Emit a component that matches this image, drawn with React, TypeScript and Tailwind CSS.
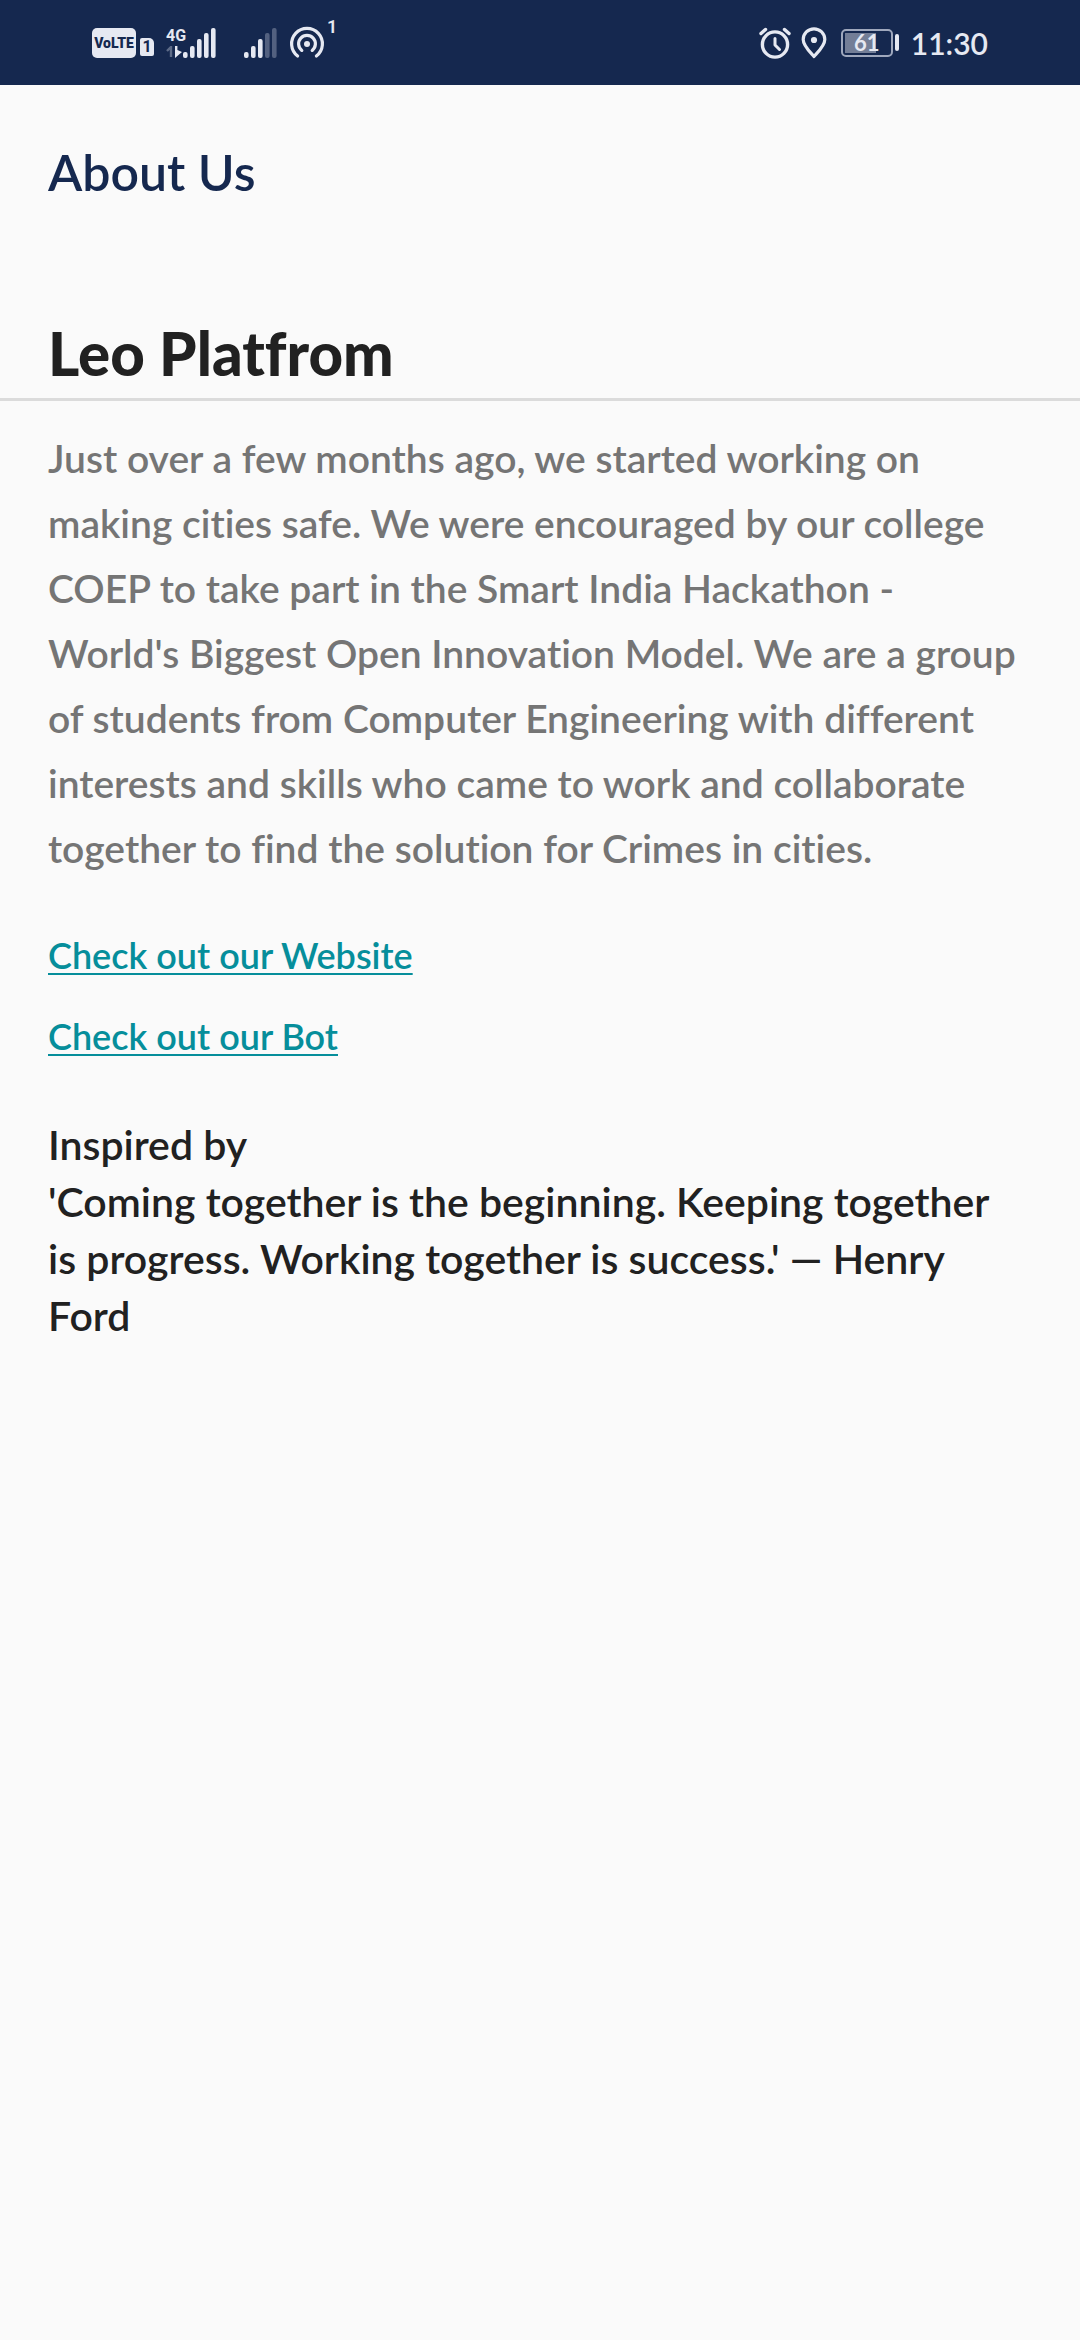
import React from "react";

const INK = "#e6e9f2";

function VolteBadge() {
  return (
    <span className="flex h-[30px] w-11 items-center justify-center rounded-[5px] bg-[#e6e9f2] font-['Roboto',sans-serif] text-sm font-black leading-none text-[#15284f]">
      VoLTE
    </span>
  );
}

function SimBadge() {
  return (
    <span className="mt-2 ml-1 flex h-[18px] w-3.5 items-center justify-center rounded-[2px] rounded-tr-[5px] bg-[#e6e9f2] font-['Roboto',sans-serif] text-base font-bold leading-none text-[#15284f]">
      1
    </span>
  );
}

const BARS = [
  { x: 0, h: 6 },
  { x: 7, h: 12 },
  { x: 14, h: 19 },
  { x: 21, h: 25 },
  { x: 28, h: 30 },
];

function SignalBars({ lit }: { lit: number }) {
  return (
    <svg width="33" height="30" viewBox="0 0 33 30" aria-hidden="true">
      {BARS.map((b, i) => (
        <rect key={b.x} x={b.x} y={30 - b.h} width="4.6" height={b.h} rx="2" fill={INK} opacity={i < lit ? 1 : 0.3} />
      ))}
    </svg>
  );
}

function Network() {
  return (
    <span className="ml-3 flex h-[30px] w-[17px] flex-col justify-between">
      <span className="font-['Roboto',sans-serif] text-base font-bold leading-4 text-[#e6e9f2]">4G</span>
      <svg width="17" height="12" viewBox="0 0 17 12" aria-hidden="true">
        <path d="M1 5 5 1V11" fill="none" stroke={INK} strokeWidth="2.4" opacity="0.35" />
        <path d="M9 0h2.4v4L16 6 9 12z" fill={INK} />
      </svg>
    </span>
  );
}

function Hotspot() {
  return (
    <svg width="36" height="34" viewBox="0 0 36 34" className="ml-3" fill="none" stroke={INK} strokeWidth="3.2" strokeLinecap="round" aria-label="Hotspot">
      <path d="M8.6 30A15.4 15.4 0 1 1 27.4 30" />
      <path d="M12.8 24.4A8.4 8.4 0 1 1 23.2 24.4" />
      <circle cx="18" cy="18" r="3" fill={INK} stroke="none" />
    </svg>
  );
}

function Alarm() {
  return (
    <svg width="32" height="32" viewBox="0 0 32 32" fill="none" stroke={INK} strokeWidth="3.4" strokeLinecap="round" strokeLinejoin="round" aria-label="Alarm">
      <circle cx="16" cy="17.5" r="12.6" />
      <path d="M16 11.5V18L20.5 22.5" strokeWidth="3" />
      <path d="M2 6.5 6.5 2.5M30 6.5 25.5 2.5" />
    </svg>
  );
}

function Pin() {
  return (
    <svg width="26" height="32" viewBox="0 0 26 32" className="ml-2.5" fill="none" stroke={INK} strokeWidth="3.2" strokeLinejoin="round" aria-label="Location">
      <path d="M13 29.5C9 25 2.2 19 2.2 12.6A10.8 10.8 0 0 1 23.8 12.6C23.8 19 17 25 13 29.5Z" />
      <circle cx="13" cy="13" r="3.1" fill={INK} stroke="none" />
    </svg>
  );
}

function Battery() {
  return (
    <span className="ml-3.5 flex items-center gap-0.5">
      <span className="relative flex h-7 w-[52px] items-center justify-center rounded-[5px] border-2 border-[#9fa8bd]">
        <span className="absolute inset-y-0.5 left-0.5 w-[31px] bg-[#737e97]" />
        <span className="relative font-['Lato',sans-serif] text-[22px] font-bold leading-6 text-[#e6e9f2]">61</span>
      </span>
      <span className="h-[17px] w-1 rounded-sm bg-[#e6e9f2]" />
    </span>
  );
}

function StatusBar() {
  return (
    <header className="flex h-[85px] items-center justify-between bg-[#15284f] px-[92px]">
      <div className="flex items-center">
        <VolteBadge />
        <SimBadge />
        <Network />
        <SignalBars lit={5} />
        <span className="w-7" />
        <SignalBars lit={3} />
        <Hotspot />
        <span className="mb-8 ml-0.5 font-['Roboto',sans-serif] text-lg leading-none text-[#e6e9f2]">1</span>
      </div>
      <div className="flex items-center">
        <Alarm />
        <Pin />
        <Battery />
        <time className="ml-3 font-['Lato',sans-serif] text-[30px] font-semibold leading-none text-[#e6e9f2]">11:30</time>
      </div>
    </header>
  );
}

export default function App() {
  return (
    <div className="min-h-screen bg-[#fafafa] font-['Lato',sans-serif] font-semibold text-[#212121] [font-variant-ligatures:none]">
      <StatusBar />
      <main>
        <h1 className="px-12 pt-[55px] text-[50px] font-semibold leading-[64px] text-[#15284f]">About Us</h1>
        <h2 className="border-b-[3px] border-[#dbdbdb] px-12 pt-[109px] pb-[5px] text-[60px] font-black leading-[80px]">
          Leo Platfrom
        </h2>
        <p className="px-12 pt-[25px] text-[39px] leading-[65px] text-[#757575]">
          Just over a few months ago, we started working on
          <br />
          making cities safe. We were encouraged by our college
          <br />
          COEP to take part in the Smart India Hackathon -
          <br />
          World's Biggest Open Innovation Model. We are a group
          <br />
          of students from Computer Engineering with different
          <br />
          interests and skills who came to work and collaborate
          <br />
          together to find the solution for Crimes in cities.
        </p>
        <nav className="flex flex-col items-start gap-[33px] px-12 pt-[50px] text-[36px] leading-[48px] text-[#068e9b]">
          <a href="#website" className="underline decoration-2 underline-offset-4">Check out our Website</a>
          <a href="#bot" className="underline decoration-2 underline-offset-4">Check out our Bot</a>
        </nav>
        <section className="px-12 pt-[56px] text-[41px] leading-[57px]">
          <p>Inspired by</p>
          <blockquote>
            'Coming together is the beginning. Keeping together
            <br />
            is progress. Working together is success.' — Henry
            <br />
            Ford
          </blockquote>
        </section>
      </main>
    </div>
  );
}
